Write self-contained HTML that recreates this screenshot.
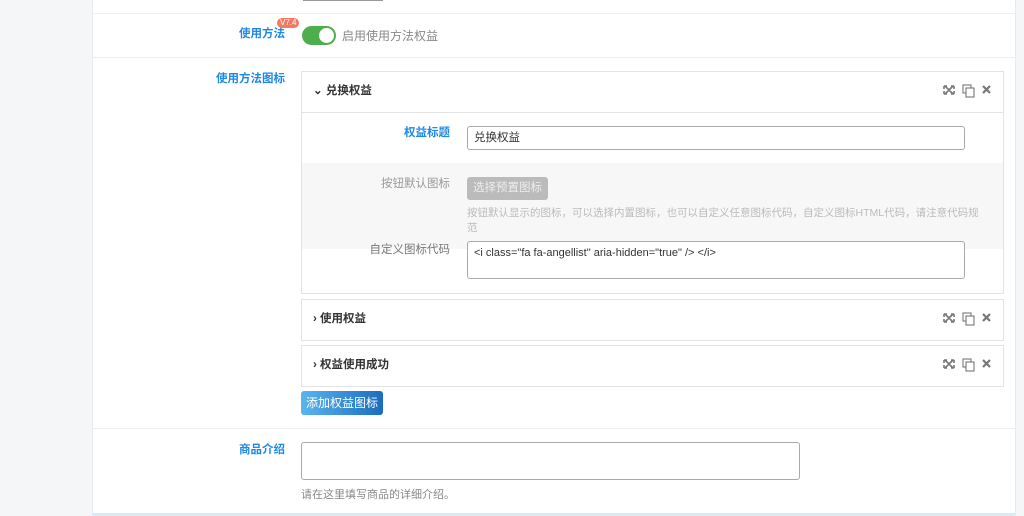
<!DOCTYPE html>
<html><head><meta charset="utf-8"><style>
*{box-sizing:border-box;margin:0;padding:0}
body{width:1024px;height:516px;background:#f5f6f8;font-family:"Liberation Sans","Noto Sans CJK SC",sans-serif;font-size:11.5px;color:#333;position:relative;overflow:hidden}
.a{position:absolute;line-height:14px}
.panel{left:92px;top:-2px;width:924px;height:518px;background:#fff;border:1px solid #e8eaed;border-bottom:3px solid #d5ecf5}
.hr{height:1px;background:#eceef0;left:93px;width:922px}
.lbl{color:#1e88e5;font-weight:bold;text-align:right;width:100px}
.glbl{color:#777;text-align:right;width:110px}
.box{border:1px solid #e3e3e3;background:#fff}
.ttl{font-weight:bold;color:#333}
.inp{border:1px solid #aaa;border-radius:3px;background:#fff}
</style></head><body>
<div class="a panel"></div>
<div class="a" style="left:303px;top:0;width:80px;height:1px;background:#999"></div>
<div class="a hr" style="top:13px"></div>
<div class="a lbl" style="left:185px;top:27px">使用方法</div>
<div class="a" style="left:277px;top:18px;background:#f07b62;color:#fff;font-size:8px;border-radius:6px;padding:0 3px;line-height:10px">V7.4</div>
<div class="a" style="left:302px;top:26px;width:34px;height:19px;background:#4cae4c;border-radius:10px"><div class="a" style="left:17px;top:2px;width:15px;height:15px;background:#fff;border-radius:50%"></div></div>
<div class="a" style="left:342px;top:29px;color:#888;font-size:12px">启用使用方法权益</div>
<div class="a hr" style="top:57px"></div>
<div class="a lbl" style="left:185px;top:72px">使用方法图标</div>

<div class="a box" style="left:301px;top:71px;width:703px;height:223px"></div>
<div class="a" style="left:302px;top:112px;width:701px;height:1px;background:#e3e3e3"></div>
<div class="a" style="left:302px;top:163px;width:701px;height:86px;background:#f7f7f7"></div>
<div class="a ttl" style="left:313px;top:84px">⌄ 兑换权益</div>
<div class="a lbl" style="left:350px;top:126px">权益标题</div>
<div class="a inp" style="left:467px;top:126px;width:498px;height:24px;padding:4px 6px">兑换权益</div>
<div class="a glbl" style="left:340px;top:177px;color:#999">按钮默认图标</div>
<div class="a" style="left:467px;top:177px;width:81px;height:23px;background:#bbb;border-radius:3px;color:#eee;text-align:center;line-height:23px">选择预置图标</div>
<div class="a" style="left:467px;top:206px;width:520px;color:#bbb;line-height:15px;font-size:10.5px">按钮默认显示的图标，可以选择内置图标，也可以自定义任意图标代码，自定义图标HTML代码，请注意代码规范</div>
<div class="a glbl" style="left:340px;top:243px">自定义图标代码</div>
<div class="a inp" style="left:467px;top:241px;width:498px;height:38px;padding:4px 6px;font-size:11px">&lt;i class="fa fa-angellist" aria-hidden="true" /&gt; &lt;/i&gt;</div>

<div class="a box" style="left:301px;top:299px;width:703px;height:42px"></div>
<div class="a ttl" style="left:313px;top:312px">› 使用权益</div>
<div class="a box" style="left:301px;top:345px;width:703px;height:42px"></div>
<div class="a ttl" style="left:313px;top:358px">› 权益使用成功</div>
<div class="a" style="left:301px;top:391px;width:82px;height:24px;background:linear-gradient(90deg,#5bb4ee,#1a6dbd);border-radius:3px;color:#fff;text-align:center;line-height:24px;font-size:12px">添加权益图标</div>
<div class="a hr" style="top:428px"></div>
<div class="a lbl" style="left:185px;top:443px">商品介绍</div>
<div class="a inp" style="left:301px;top:442px;width:499px;height:38px"></div>
<div class="a" style="left:301px;top:488px;color:#888;font-size:11px">请在这里填写商品的详细介绍。</div>

<svg class="a" style="left:940px;top:83px" width="55" height="300" viewBox="0 0 55 300">
<defs><g id="ic" fill="none" stroke="#777">
<path d="M5 3l8 8M13 3l-8 8M4 3h3M4 3v3M14 3h-3M14 3v3M4 11h3M4 11v-3M14 11h-3M14 11v-3" stroke-width="1.6"/>
<rect x="23" y="2" width="8" height="8" stroke-width="1.1"/><rect x="26" y="5" width="8" height="9" fill="#fff" stroke-width="1.1"/>
<path d="M43 3l7 7M50 3l-7 7" stroke-width="2.2"/></g></defs>
<use href="#ic"/><use href="#ic" y="228"/><use href="#ic" y="274"/>
</svg>
</body></html>
